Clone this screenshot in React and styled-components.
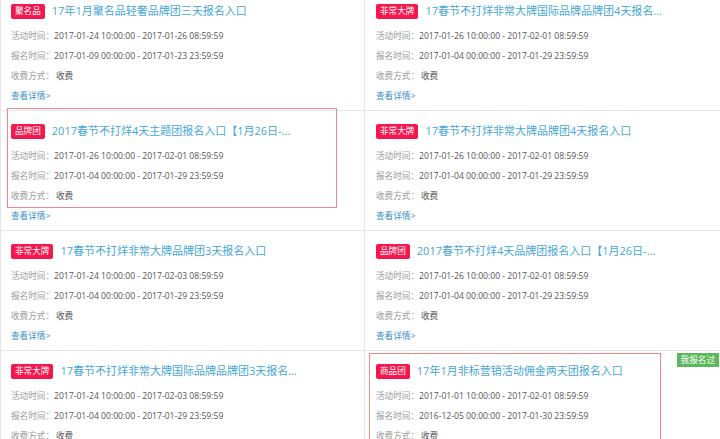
import React from 'react'
import styled, { createGlobalStyle } from 'styled-components'

const Global = createGlobalStyle`
  body {
    margin: 0;
    background: #fff;
    overflow: hidden;
    font-family: "Open Sans", "Noto Sans CJK SC", sans-serif;
  }
`

const activities = [
  {
    tag: '聚名品',
    title: '17年1月聚名品轻奢品牌团三天报名入口',
    active: '2017-01-24 10:00:00 - 2017-01-26 08:59:59',
    signup: '2017-01-09 00:00:00 - 2017-01-23 23:59:59',
  },
  {
    tag: '非常大牌',
    title: '17春节不打烊非常大牌国际品牌品牌团4天报名入口',
    active: '2017-01-26 10:00:00 - 2017-02-01 08:59:59',
    signup: '2017-01-04 00:00:00 - 2017-01-29 23:59:59',
  },
  {
    tag: '品牌团',
    title: '2017春节不打烊4天主题团报名入口【1月26日-2月1日】',
    active: '2017-01-26 10:00:00 - 2017-02-01 08:59:59',
    signup: '2017-01-04 00:00:00 - 2017-01-29 23:59:59',
    highlight: { top: -3, left: 6, width: 330, height: 100 },
  },
  {
    tag: '非常大牌',
    title: '17春节不打烊非常大牌品牌团4天报名入口',
    active: '2017-01-26 10:00:00 - 2017-02-01 08:59:59',
    signup: '2017-01-04 00:00:00 - 2017-01-29 23:59:59',
  },
  {
    tag: '非常大牌',
    title: '17春节不打烊非常大牌品牌团3天报名入口',
    active: '2017-01-24 10:00:00 - 2017-02-03 08:59:59',
    signup: '2017-01-04 00:00:00 - 2017-01-29 23:59:59',
  },
  {
    tag: '品牌团',
    title: '2017春节不打烊4天品牌团报名入口【1月26日-2月1日】',
    active: '2017-01-26 10:00:00 - 2017-02-01 08:59:59',
    signup: '2017-01-04 00:00:00 - 2017-01-29 23:59:59',
  },
  {
    tag: '非常大牌',
    title: '17春节不打烊非常大牌国际品牌品牌团3天报名入口',
    active: '2017-01-24 10:00:00 - 2017-02-03 08:59:59',
    signup: '2017-01-04 00:00:00 - 2017-01-29 23:59:59',
  },
  {
    tag: '商品团',
    title: '17年1月非标营销活动佣金两天团报名入口',
    active: '2017-01-01 10:00:00 - 2017-02-01 08:59:59',
    signup: '2016-12-05 00:00:00 - 2017-01-30 23:59:59',
    highlight: { top: 2, left: 4, width: 292, height: 100 },
    joined: true,
  },
]

const App = () => {
  return (
    <>
      <Global />
      <Grid>
        {activities.map((a, i) => (
          <Cell key={i} right={i % 2 === 1}>
            <Header>
              <Tag>{a.tag}</Tag>
              <Title>{a.title}</Title>
            </Header>
            <Info>
              <Line>
                <Label>活动时间：</Label>
                <Value>{a.active}</Value>
              </Line>
              <Line>
                <Label>报名时间：</Label>
                <Value>{a.signup}</Value>
              </Line>
              <Line>
                <Label>收费方式：</Label>
                <Value fee>收费</Value>
              </Line>
              <Line>
                <More href="#">查看详情&gt;</More>
              </Line>
            </Info>
            {a.highlight && <Highlight style={a.highlight} />}
            {a.joined && <Joined>我报名过</Joined>}
          </Cell>
        ))}
      </Grid>
    </>
  )
}

const Grid = styled.div`
  width: 720px;
  margin-top: -9px;
  display: grid;
  grid-template-columns: 363px 1fr;
  border-left: 1px solid #e6e6e6;
  box-sizing: border-box;
`

const Cell = styled.div`
  position: relative;
  padding: 10px 10px 4px ${p => (p.right ? '11px' : '10px')};
  border-bottom: 1px solid #e6e6e6;
  border-left: ${p => (p.right ? '1px solid #e6e6e6' : 'none')};
  min-width: 0;
`

const Header = styled.div`
  display: flex;
  align-items: center;
  height: 20px;
  gap: 7px;
`

const Tag = styled.span`
  flex: none;
  height: 15px;
  line-height: 15px;
  padding: 0 4px;
  border-radius: 2px;
  background: #f5174d;
  color: #fff;
  font-size: 8.6px;
`

const Title = styled.span`
  max-width: 243px;
  overflow: hidden;
  white-space: nowrap;
  text-overflow: ellipsis;
  color: #45a6d9;
  font-size: 11px;
  line-height: 20px;
`

const Info = styled.div`
  margin-top: 5px;
`

const Line = styled.div`
  height: 20px;
  line-height: 20px;
  font-size: 8.6px;
  white-space: nowrap;
`

const Label = styled.span`
  color: #9a9a9a;
`

const Value = styled.span`
  color: #555;
  margin-left: ${p => (p.fee ? '2px' : '0')};
`

const More = styled.a`
  color: #3a8fc8;
  text-decoration: none;
`

const Highlight = styled.div`
  position: absolute;
  border: 1px solid #f08a8a;
  box-sizing: border-box;
  pointer-events: none;
`

const Joined = styled.span`
  position: absolute;
  top: 2px;
  right: 1px;
  height: 14px;
  line-height: 14px;
  padding: 0 4px;
  background: #5cb85c;
  color: #fff;
  font-size: 8.6px;
`

export default App
